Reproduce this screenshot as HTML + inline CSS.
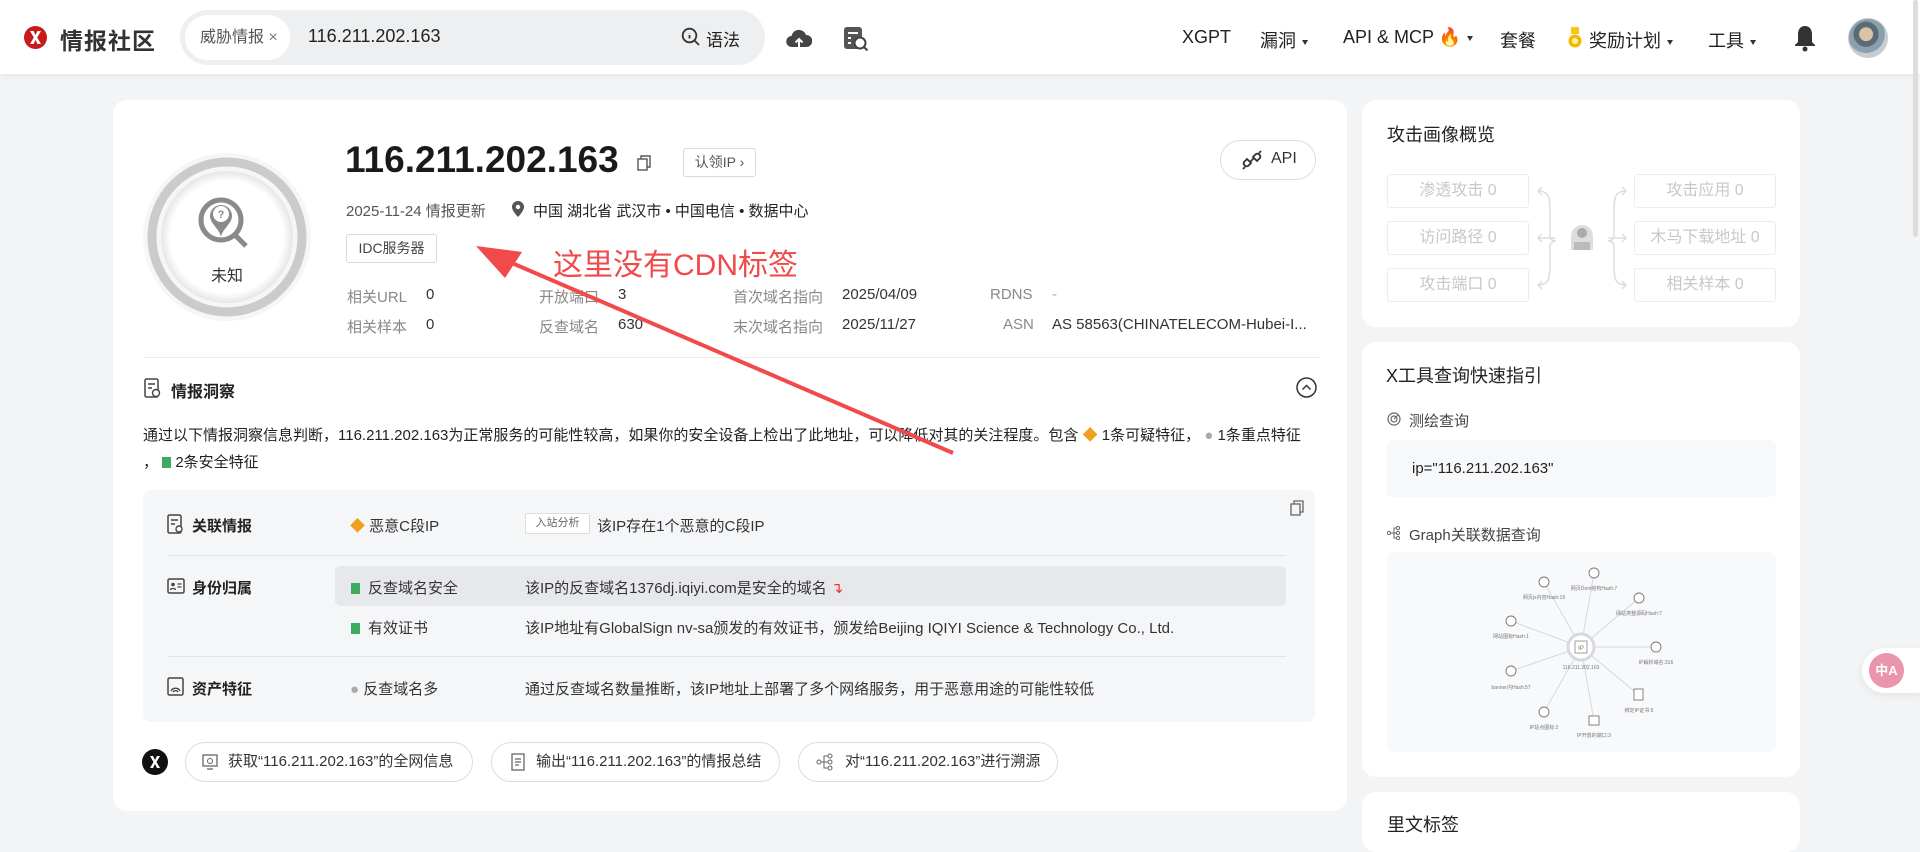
<!DOCTYPE html>
<html><head><meta charset="utf-8">
<style>
*{margin:0;padding:0;box-sizing:border-box}
body{width:1920px;height:820px;overflow:hidden;background:#f3f4f6;font-family:"Liberation Sans","Noto Sans CJK SC",sans-serif;color:#333;position:relative}
.a{position:absolute;white-space:nowrap}
.hdr{position:absolute;left:0;top:0;width:1920px;height:74px;background:#fff;box-shadow:0 2px 6px rgba(0,0,0,.06)}
.card{position:absolute;background:#fff;border-radius:14px}
.nav{font-size:18px;color:#222;top:27px}
.caret{display:inline-block;width:0;height:0;border-left:3.5px solid transparent;border-right:3.5px solid transparent;border-top:5px solid #333;vertical-align:middle;margin-left:6px}
.lbl{color:#888;font-size:15px}
.val{color:#333;font-size:15px}
.box{position:absolute;border:1px solid #ececec;border-radius:3px;color:#c8c8c8;font-size:16px;text-align:center;line-height:32px;width:142px;height:34px}
.btn{position:absolute;border:1px solid #dcdcdc;border-radius:20px;height:40px;top:742px;font-size:15px;line-height:38px;color:#333;background:#fff}
</style></head><body>

<div class="hdr">
  <svg class="a" style="left:24px;top:26px" width="23" height="23" viewBox="0 0 23 23"><circle cx="11.5" cy="11.5" r="11.5" fill="#c8191b"/><path d="M6 5h3.5l2 4 2-4H17l-3.8 6.5L17 18h-3.5l-2-4-2 4H6l3.8-6.5z" fill="#fff"/></svg>
  <div class="a" style="left:60px;top:22px;font-size:23px;font-weight:bold;color:#333;letter-spacing:1px">情报社区</div>
  <div class="a" style="left:180px;top:10px;width:585px;height:55px;border-radius:28px;background:#eeeff1"></div>
  <div class="a" style="left:185px;top:15px;width:105px;height:45px;border-radius:23px;background:#fff;font-size:16px;color:#555;line-height:45px;padding-left:15px">威胁情报 <span style="color:#777">×</span></div>
  <div class="a" style="left:308px;top:26px;font-size:18px;color:#222">116.211.202.163</div>
  <svg class="a" style="left:681px;top:27px" width="20" height="20" viewBox="0 0 20 20"><circle cx="8.5" cy="8.5" r="6.8" fill="none" stroke="#333" stroke-width="1.8"/><path d="M13.5 13.5l4.5 4.5" stroke="#333" stroke-width="1.8"/><path d="M8.5 6v0.3M8.5 8v3.5" stroke="#333" stroke-width="1.8"/></svg>
  <div class="a" style="left:706px;top:26px;font-size:17px;color:#222">语法</div>
  <svg class="a" style="left:786px;top:27px" width="26" height="24" viewBox="0 0 26 24"><path d="M6 20a5.5 5.5 0 0 1-.5-11A7.5 7.5 0 0 1 20 8a5.5 5.5 0 0 1 .5 12z" fill="#444"/><path d="M13 22V12M9.5 15.5 13 12l3.5 3.5" stroke="#fff" stroke-width="2" fill="none"/></svg>
  <svg class="a" style="left:843px;top:25px" width="26" height="27" viewBox="0 0 26 27"><rect x="1" y="2" width="18" height="22" rx="3" fill="#555"/><rect x="5" y="7" width="10" height="2" fill="#fff"/><rect x="5" y="12" width="3" height="2" fill="#fff"/><rect x="5" y="17" width="3" height="2" fill="#fff"/><circle cx="17" cy="18" r="5.5" fill="#fff" stroke="#444" stroke-width="2"/><path d="M21 22l3.5 3.5" stroke="#444" stroke-width="2"/></svg>

  <div class="a nav" style="left:1182px">XGPT</div>
  <div class="a nav" style="left:1260px">漏洞<span class="caret"></span></div>
  <div class="a nav" style="left:1343px">API &amp; MCP <span style="color:#e5322d">&#x1F525;</span><span class="caret"></span></div>
  <div class="a nav" style="left:1500px">套餐</div>
  <svg class="a" style="left:1568px;top:27px" width="14" height="22" viewBox="0 0 14 22"><rect x="3" y="0" width="8" height="7" fill="#f5c518"/><circle cx="7" cy="14" r="6.5" fill="#f5b800"/><circle cx="7" cy="14" r="3" fill="#fff3b0"/></svg>
  <div class="a nav" style="left:1589px">奖励计划<span class="caret"></span></div>
  <div class="a nav" style="left:1708px">工具<span class="caret"></span></div>
  <svg class="a" style="left:1794px;top:25px" width="22" height="27" viewBox="0 0 22 27"><path d="M11 1c-5 0-7 4-7 8v8l-3 3v1h20v-1l-3-3V9c0-4-2-8-7-8z" fill="#333"/><circle cx="11" cy="24" r="2.5" fill="#333"/></svg>
  <div class="a" style="left:1848px;top:18px;width:40px;height:40px;border-radius:50%;background:radial-gradient(circle at 45% 40%,#d9c2a8 0 22%,#5a6b78 23% 40%,#8aa0ad 41% 60%,#c7ccd0 61%);border:1px solid #ccc"></div>
</div>
<div class="a" style="left:1913px;top:0;width:5px;height:237px;background:#ddd;border-radius:3px"></div>

<!-- main card -->
<div class="card" style="left:113px;top:100px;width:1234px;height:711px"></div>

<svg class="a" style="left:140px;top:150px" width="174" height="174" viewBox="0 0 174 174">
  <defs><radialGradient id="g" cx="50%" cy="50%" r="50%"><stop offset="85%" stop-color="#fff"/><stop offset="100%" stop-color="#e6e6e6"/></radialGradient></defs>
  <circle cx="87" cy="87" r="84" fill="#f6f6f6"/>
  <circle cx="87" cy="87" r="75" fill="none" stroke="#cbcbcb" stroke-width="9"/>
  <circle cx="87" cy="87" r="66" fill="url(#g)"/>
  <circle cx="81" cy="70" r="20" fill="none" stroke="#8a8a8a" stroke-width="5"/>
  <path d="M94 84l12 12" stroke="#8a8a8a" stroke-width="5"/>
  <path d="M70 66a11 11 0 0 1 22 0c0 8-11 14-11 22c0-8-11-14-11-22z" fill="#8a8a8a"/>
  <circle cx="81" cy="64" r="8" fill="#fff"/>
  <text x="81" y="68" font-size="11" font-weight="bold" fill="#8a8a8a" text-anchor="middle" font-family="Liberation Sans">?</text>
  <text x="87" y="131" font-size="16" fill="#333" text-anchor="middle" font-family="Liberation Sans,Noto Sans CJK SC,sans-serif">未知</text>
</svg>

<div class="a" style="left:345px;top:139px;font-size:37px;font-weight:bold;color:#1a1a1a">116.211.202.163</div>
<svg class="a" style="left:637px;top:155px" width="14" height="16" viewBox="0 0 14 16"><rect x="1" y="4" width="9" height="11" fill="none" stroke="#555" stroke-width="1.4"/><path d="M4 4V1h9v11h-3" fill="none" stroke="#555" stroke-width="1.4"/></svg>
<div class="a" style="left:683px;top:148px;width:73px;height:29px;border:1px solid #d6d9de;border-radius:3px;font-size:14px;color:#555;line-height:27px;text-align:center">认领IP ›</div>

<div class="a" style="left:1220px;top:140px;width:96px;height:40px;border:1px solid #ddd;border-radius:20px"></div>
<svg class="a" style="left:1240px;top:148px" width="24" height="24" viewBox="0 0 24 24"><path d="M10 14l4-4" stroke="#333" stroke-width="1.8"/><path d="M7 11l-3 3a3 3 0 0 0 4 4l3-3zM17 13l3-3a3 3 0 0 0-4-4l-3 3z" fill="none" stroke="#333" stroke-width="1.8"/><path d="M3 21l2-2M19 5l2-2" stroke="#333" stroke-width="1.8"/></svg>
<div class="a" style="left:1271px;top:150px;font-size:16px;color:#333">API</div>

<div class="a" style="left:346px;top:200px;font-size:15px;color:#555">2025-11-24 情报更新</div>
<svg class="a" style="left:512px;top:201px" width="12" height="16" viewBox="0 0 12 16"><path d="M6 0a6 6 0 0 1 6 6c0 4-6 10-6 10S0 10 0 6a6 6 0 0 1 6-6z" fill="#555"/><circle cx="6" cy="6" r="2.2" fill="#fff"/></svg>
<div class="a" style="left:533px;top:200px;font-size:15px;color:#222">中国 湖北省 武汉市 • 中国电信 • 数据中心</div>
<div class="a" style="left:346px;top:234px;width:91px;height:29px;border:1px solid #d6d9de;border-radius:3px;font-size:14px;color:#444;line-height:27px;text-align:center">IDC服务器</div>

<div class="a lbl" style="left:347px;top:286px">相关URL</div><div class="a val" style="left:426px;top:286px">0</div>
<div class="a lbl" style="left:347px;top:316px">相关样本</div><div class="a val" style="left:426px;top:316px">0</div>
<div class="a lbl" style="left:539px;top:286px">开放端口</div><div class="a val" style="left:618px;top:286px">3</div>
<div class="a lbl" style="left:539px;top:316px">反查域名</div><div class="a val" style="left:618px;top:316px">630</div>
<div class="a lbl" style="left:733px;top:286px">首次域名指向</div><div class="a val" style="left:842px;top:286px">2025/04/09</div>
<div class="a lbl" style="left:733px;top:316px">末次域名指向</div><div class="a val" style="left:842px;top:316px">2025/11/27</div>
<div class="a lbl" style="left:990px;top:286px">RDNS</div><div class="a" style="left:1052px;top:286px;color:#aaa;font-size:15px">-</div>
<div class="a lbl" style="left:1003px;top:316px">ASN</div><div class="a val" style="left:1052px;top:316px">AS 58563(CHINATELECOM-Hubei-I...</div>

<div class="a" style="left:143px;top:357px;width:1177px;height:1px;background:#ececec"></div>

<svg class="a" style="left:144px;top:378px" width="18" height="21" viewBox="0 0 18 21"><rect x="1" y="1" width="13" height="18" rx="1.5" fill="none" stroke="#444" stroke-width="1.5"/><path d="M4 6h7M4 10h4" stroke="#444" stroke-width="1.5"/><circle cx="12" cy="15" r="3.5" fill="#fff" stroke="#444" stroke-width="1.4"/></svg>
<div class="a" style="left:171px;top:378px;font-size:16px;font-weight:bold;color:#222">情报洞察</div>
<svg class="a" style="left:1296px;top:377px" width="21" height="21" viewBox="0 0 21 21"><circle cx="10.5" cy="10.5" r="9.5" fill="none" stroke="#333" stroke-width="1.5"/><path d="M6.5 12.5l4-4 4 4" fill="none" stroke="#333" stroke-width="1.5"/></svg>

<div class="a" style="left:143px;top:424px;font-size:15px;color:#222">通过以下情报洞察信息判断，116.211.202.163为正常服务的可能性较高，如果你的安全设备上检出了此地址，可以降低对其的关注程度。包含 <span style="color:#f0a020">◆</span> 1条可疑特征， <span style="color:#aaa">●</span> 1条重点特征</div>
<div class="a" style="left:143px;top:451px;font-size:15px;color:#222">， <span style="display:inline-block;width:9px;height:11px;background:#3daa62;vertical-align:-1px"></span> 2条安全特征</div>

<div class="a" style="left:143px;top:490px;width:1172px;height:232px;background:#f5f6f8;border-radius:8px"></div>
<svg class="a" style="left:1290px;top:500px" width="14" height="16" viewBox="0 0 14 16"><rect x="1" y="4" width="9" height="11" fill="none" stroke="#666" stroke-width="1.3"/><path d="M4 4V1h9v11h-3" fill="none" stroke="#666" stroke-width="1.3"/></svg>

<svg class="a" style="left:167px;top:514px" width="18" height="21" viewBox="0 0 18 21"><rect x="1" y="1" width="13" height="18" rx="1.5" fill="none" stroke="#444" stroke-width="1.5"/><path d="M4 6h7M4 10h4" stroke="#444" stroke-width="1.5"/><circle cx="12" cy="15" r="3" fill="#fff" stroke="#444" stroke-width="1.4"/></svg>
<div class="a" style="left:192px;top:515px;font-size:15px;font-weight:bold;color:#222">关联情报</div>
<div class="a" style="left:350px;top:515px;font-size:15px;color:#333"><span style="color:#f0a020">◆</span> 恶意C段IP</div>
<div class="a" style="left:525px;top:513px;width:65px;height:21px;border:1px solid #ddd;background:#fff;border-radius:2px;font-size:11px;color:#666;line-height:19px;text-align:center">入站分析</div>
<div class="a" style="left:597px;top:515px;font-size:15px;color:#333">该IP存在1个恶意的C段IP</div>
<div class="a" style="left:168px;top:555px;width:1118px;height:1px;background:#e3e3e3"></div>

<div class="a" style="left:335px;top:566px;width:951px;height:40px;background:#e7e8eb;border-radius:6px"></div>
<svg class="a" style="left:167px;top:577px" width="18" height="18" viewBox="0 0 18 18"><rect x="1" y="2" width="16" height="14" rx="1.5" fill="none" stroke="#444" stroke-width="1.5"/><circle cx="6" cy="7.5" r="1.8" fill="#444"/><path d="M3.5 13c0-2 5-2 5 0M10.5 7h4M10.5 10h4" stroke="#444" stroke-width="1.3" fill="none"/></svg>
<div class="a" style="left:192px;top:577px;font-size:15px;font-weight:bold;color:#222">身份归属</div>
<div class="a" style="left:351px;top:577px;font-size:15px;color:#333"><span style="display:inline-block;width:9px;height:11px;background:#3daa62;vertical-align:-1px;margin-right:8px"></span>反查域名安全</div>
<div class="a" style="left:525px;top:577px;font-size:15px;color:#333">该IP的反查域名1376dj.iqiyi.com是安全的域名 <span style="color:#e33">↴</span></div>
<div class="a" style="left:351px;top:617px;font-size:15px;color:#333"><span style="display:inline-block;width:9px;height:11px;background:#3daa62;vertical-align:-1px;margin-right:8px"></span>有效证书</div>
<div class="a" style="left:525px;top:617px;font-size:15px;color:#333">该IP地址有GlobalSign nv-sa颁发的有效证书，颁发给Beijing IQIYI Science &amp; Technology Co., Ltd.</div>
<div class="a" style="left:168px;top:656px;width:1118px;height:1px;background:#e3e3e3"></div>

<svg class="a" style="left:167px;top:677px" width="18" height="20" viewBox="0 0 18 20"><rect x="1" y="1" width="15" height="17" rx="1.5" fill="none" stroke="#444" stroke-width="1.5"/><path d="M4 14a5 5 0 0 1 9 0M6 15a3 3 0 0 1 5 0" stroke="#444" stroke-width="1.3" fill="none"/></svg>
<div class="a" style="left:192px;top:678px;font-size:15px;font-weight:bold;color:#222">资产特征</div>
<div class="a" style="left:350px;top:678px;font-size:15px;color:#333"><span style="color:#aaa">●</span> 反查域名多</div>
<div class="a" style="left:525px;top:678px;font-size:15px;color:#333">通过反查域名数量推断，该IP地址上部署了多个网络服务，用于恶意用途的可能性较低</div>

<svg class="a" style="left:142px;top:749px" width="26" height="26" viewBox="0 0 26 26"><circle cx="13" cy="13" r="13" fill="#111"/><path d="M8 7h3l2 4 2-4h3l-3.5 6 3.5 6h-3l-2-4-2 4H8l3.5-6z" fill="#fff"/></svg>
<div class="btn" style="left:185px;width:288px;padding-left:42px">获取“116.211.202.163”的全网信息</div>
<svg class="a" style="left:202px;top:754px" width="16" height="16" viewBox="0 0 16 16"><rect x="1" y="1" width="14" height="11" fill="none" stroke="#666" stroke-width="1.3"/><path d="M5 15h6" stroke="#666" stroke-width="1.3"/><circle cx="8" cy="7" r="2.5" fill="none" stroke="#666"/></svg>
<div class="btn" style="left:491px;width:289px;padding-left:44px">输出“116.211.202.163”的情报总结</div>
<svg class="a" style="left:511px;top:753px" width="14" height="18" viewBox="0 0 14 18"><rect x="1" y="1" width="12" height="16" fill="none" stroke="#666" stroke-width="1.3"/><path d="M4 6h6M4 9h6M4 12h4" stroke="#666" stroke-width="1.2"/></svg>
<div class="btn" style="left:798px;width:260px;padding-left:46px">对“116.211.202.163”进行溯源</div>
<svg class="a" style="left:816px;top:753px" width="18" height="18" viewBox="0 0 18 18"><circle cx="3" cy="9" r="2" fill="none" stroke="#666"/><circle cx="14" cy="3" r="2" fill="none" stroke="#666"/><circle cx="14" cy="9" r="2" fill="none" stroke="#666"/><circle cx="14" cy="15" r="2" fill="none" stroke="#666"/><path d="M5 9h7M8 9V3h4M8 9v6h4" fill="none" stroke="#666"/></svg>

<!-- annotation -->
<svg class="a" style="left:0;top:0" width="1920" height="820">
  <path d="M953 453 L505 260" stroke="#f04a4a" stroke-width="4"/>
  <path d="M476 246 L522 252 L505 278 Z" fill="#f04a4a"/>
</svg>
<div class="a" style="left:553px;top:240px;font-size:30px;color:#f04a4a">这里没有CDN标签</div>

<!-- right card 1 -->
<div class="card" style="left:1362px;top:100px;width:438px;height:227px"></div>
<div class="a" style="left:1387px;top:121px;font-size:18px;color:#222">攻击画像概览</div>
<div class="box" style="left:1387px;top:174px">渗透攻击 0</div>
<div class="box" style="left:1387px;top:221px">访问路径 0</div>
<div class="box" style="left:1387px;top:268px">攻击端口 0</div>
<div class="box" style="left:1634px;top:174px">攻击应用 0</div>
<div class="box" style="left:1634px;top:221px">木马下载地址 0</div>
<div class="box" style="left:1634px;top:268px">相关样本 0</div>
<svg class="a" style="left:1530px;top:170px" width="104" height="140" viewBox="0 0 104 140">
  <g fill="none" stroke="#ddd" stroke-width="1.5">
    <path d="M8 21c10 0 12 5 12 20v24c0 4 2 6 6 6M8 115c10 0 12-5 12-20V77c0-4 2-6 6-6M8 68h18"/>
    <path d="M96 21c-10 0-12 5-12 20v24c0 4-2 6-6 6M96 115c-10 0-12-5-12-20V77c0-4-2-6-6-6M96 68H78"/>
    <path d="M12 17l-4 4 4 4M12 64l-4 4 4 4M12 111l-4 4 4 4M92 17l4 4-4 4M92 64l4 4-4 4M92 111l4 4-4 4"/>
  </g>
  <path d="M41 80V66a11 11 0 0 1 22 0v14z" fill="#ddd"/><circle cx="52" cy="63" r="5" fill="#aaa"/><rect x="44" y="72" width="16" height="8" fill="#bbb"/>
</svg>

<!-- right card 2 -->
<div class="card" style="left:1362px;top:342px;width:438px;height:435px"></div>
<div class="a" style="left:1386px;top:362px;font-size:18px;color:#222">X工具查询快速指引</div>
<svg class="a" style="left:1387px;top:412px" width="14" height="14" viewBox="0 0 14 14"><circle cx="7" cy="7" r="6" fill="none" stroke="#666" stroke-width="1.2"/><circle cx="7" cy="7" r="3" fill="none" stroke="#666" stroke-width="1.2"/><path d="M7 7l4-4" stroke="#666"/></svg>
<div class="a" style="left:1409px;top:410px;font-size:15px;color:#444">测绘查询</div>
<div class="a" style="left:1387px;top:440px;width:389px;height:57px;background:#f7f8fa;border-radius:6px"></div>
<div class="a" style="left:1412px;top:460px;font-size:15px;color:#222">ip="116.211.202.163"</div>
<svg class="a" style="left:1387px;top:526px" width="14" height="14" viewBox="0 0 14 14"><circle cx="2" cy="7" r="1.6" fill="none" stroke="#666"/><circle cx="11" cy="2" r="1.6" fill="none" stroke="#666"/><circle cx="11" cy="7" r="1.6" fill="none" stroke="#666"/><circle cx="11" cy="12" r="1.6" fill="none" stroke="#666"/><path d="M4 7h5M7 7V2h2M7 7v5h2" fill="none" stroke="#666"/></svg>
<div class="a" style="left:1409px;top:524px;font-size:15px;color:#444">Graph关联数据查询</div>
<div class="a" style="left:1387px;top:552px;width:389px;height:200px;background:#f8f9fb;border-radius:6px"></div>
<svg class="a" style="left:1387px;top:552px" width="389" height="200" viewBox="1387 552 389 200" font-family="Liberation Sans,Noto Sans CJK SC,sans-serif" font-size="5" fill="#777" text-anchor="middle">
  <g stroke="#d5d8dd" stroke-width="1">
    <path d="M1581 647L1544 582M1581 647L1594 573M1581 647L1639 598M1581 647L1511 621M1581 647L1656 647M1581 647L1511 671M1581 647L1639 695M1581 647L1544 712M1581 647L1594 721"/>
  </g>
  <circle cx="1581" cy="647" r="13" fill="#fff" stroke="#d5d9e2" stroke-width="3"/>
  <rect x="1575" y="641" width="12" height="12" fill="none" stroke="#888" stroke-width=".8"/>
  <text x="1581" y="650" font-size="6">IP</text>
  <text x="1581" y="669">116.211.202.163</text>
  <g fill="#fff" stroke="#777" stroke-width=".9">
    <circle cx="1544" cy="582" r="5"/><circle cx="1594" cy="573" r="5"/><circle cx="1639" cy="598" r="5"/><circle cx="1511" cy="621" r="5"/><circle cx="1656" cy="647" r="5"/><circle cx="1511" cy="671" r="5"/><rect x="1634" y="689" width="9" height="11"/><circle cx="1544" cy="712" r="5"/><rect x="1589" y="716" width="10" height="9"/>
  </g>
  <text x="1544" y="599">网页js内容Hash:19</text>
  <text x="1594" y="590">网页Dom结构Hash:7</text>
  <text x="1639" y="615">网站类整源码Hash:7</text>
  <text x="1511" y="638">网站图标Hash:1</text>
  <text x="1656" y="664">IP解析域名:316</text>
  <text x="1511" y="689">banner内Hash:57</text>
  <text x="1639" y="712">绑定IP证书:5</text>
  <text x="1544" y="729">IP站点图标:2</text>
  <text x="1594" y="737">IP开放的端口:3</text>
</svg>

<!-- right card 3 -->
<div class="card" style="left:1362px;top:792px;width:438px;height:60px"></div>
<div class="a" style="left:1387px;top:811px;font-size:18px;color:#222">里文标签</div>

<!-- translate float -->
<div class="a" style="left:1862px;top:648px;width:58px;height:45px;background:#fff;border-radius:23px 0 0 23px;box-shadow:0 2px 8px rgba(0,0,0,.08)"></div>
<div class="a" style="left:1869px;top:653px;width:35px;height:35px;border-radius:50%;background:#e895ad;color:#fff;font-size:13px;font-weight:bold;line-height:35px;text-align:center">中A</div>
</body></html>
